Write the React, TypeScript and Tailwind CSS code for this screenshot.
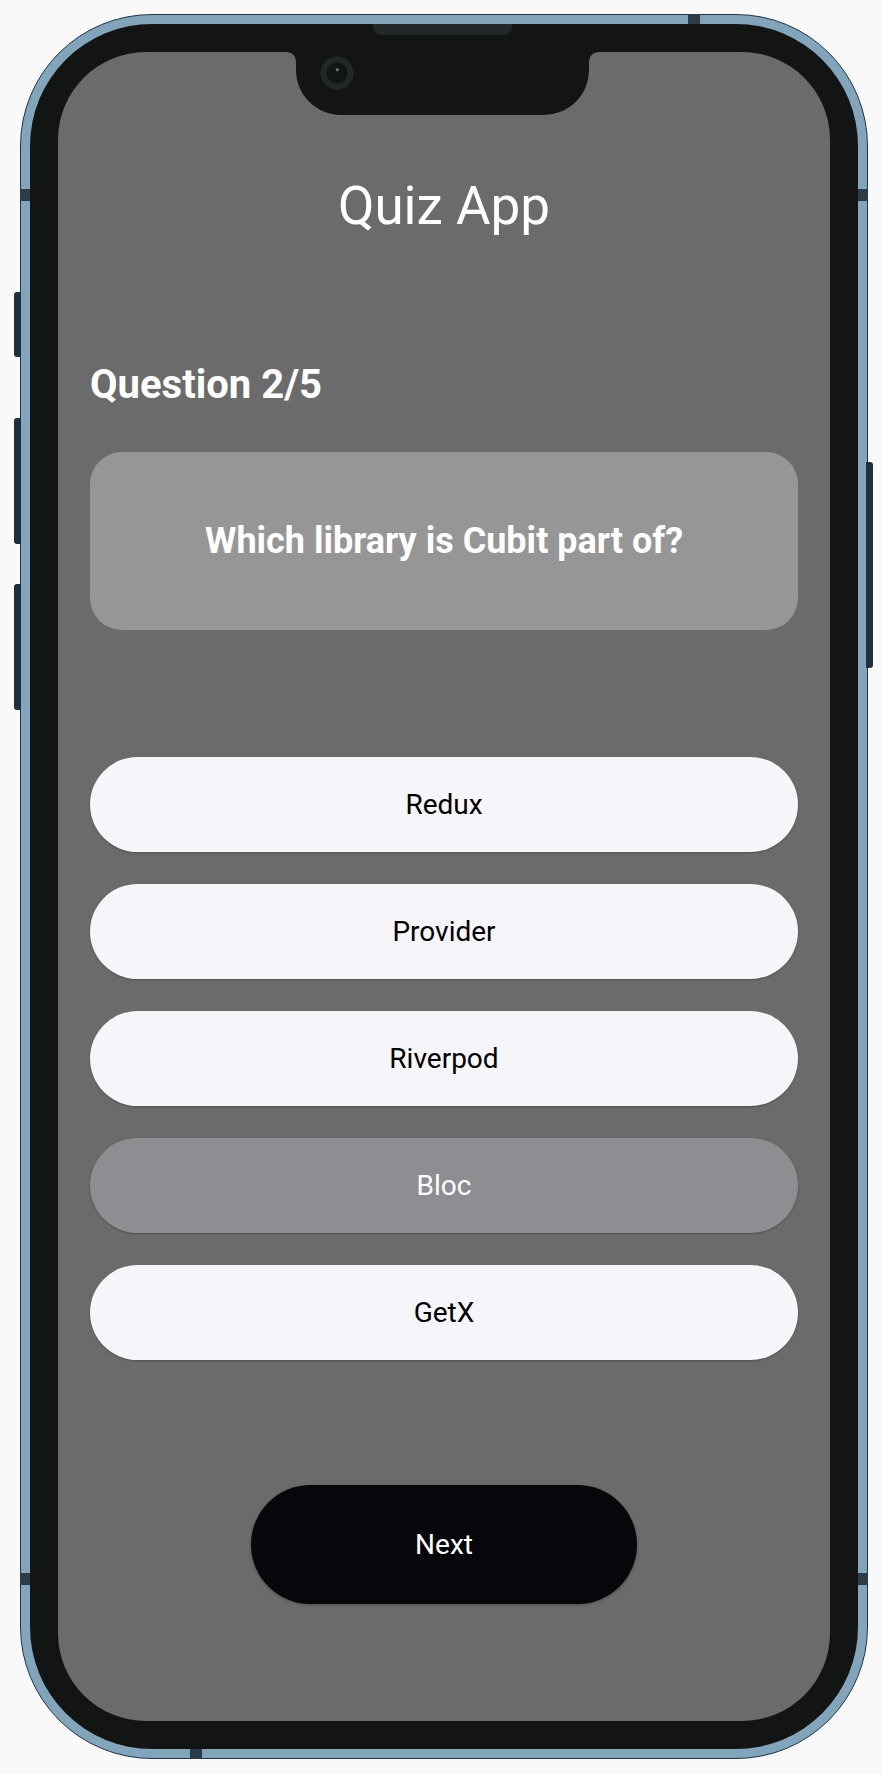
import React from "react";

const options = ["Redux", "Provider", "Riverpod", "Bloc", "GetX"];
const selected = "Bloc";

export default function App() {
  return (
    <div className="min-h-[1774px] w-[882px] bg-[#f9f9f9] pt-[14px] pl-[20px]" style={{ fontFamily: "Roboto, 'Noto Sans', sans-serif" }}>
      <div className="relative h-[1745px] w-[848px] rounded-[132px] border border-[#1f3447] bg-[#83a5bc] p-[9px]">
        {/* side buttons */}
        <div className="absolute left-[-7px] top-[277px] h-[65px] w-[7px] rounded-l-[3px] bg-[#1d3040]" />
        <div className="absolute left-[-7px] top-[403px] h-[126px] w-[7px] rounded-l-[3px] bg-[#1d3040]" />
        <div className="absolute left-[-7px] top-[569px] h-[126px] w-[7px] rounded-l-[3px] bg-[#1d3040]" />
        <div className="absolute right-[-6px] top-[447px] h-[206px] w-[7px] rounded-r-[3px] bg-[#1d3040]" />
        {/* band marks */}
        <div className="absolute left-[667px] top-[-1px] h-[10px] w-[12px] bg-[#2e3c48]" />
        <div className="absolute left-[-1px] top-[174px] h-[12px] w-[10px] bg-[#2e3c48]" />
        <div className="absolute right-[-1px] top-[174px] h-[12px] w-[10px] bg-[#2e3c48]" />
        <div className="absolute left-[-1px] top-[1558px] h-[12px] w-[10px] bg-[#2e3c48]" />
        <div className="absolute right-[-1px] top-[1558px] h-[12px] w-[10px] bg-[#2e3c48]" />
        <div className="absolute bottom-[-1px] left-[169px] h-[10px] w-[12px] bg-[#2e3c48]" />

        <div className="relative h-full w-full rounded-[122px] bg-[#131514] p-[28px]">
          {/* speaker */}
          <div className="absolute left-[343px] top-0 h-[11px] w-[139px] rounded-b-[8px] bg-[#222829]" />

          <div className="relative flex h-full w-full flex-col overflow-hidden rounded-[88px] bg-[#6b6b6b] px-[32px] pt-[128px]">
            {/* notch */}
            <svg className="absolute left-[227px] top-0" width="315" height="63" viewBox="0 0 315 63">
              <path d="M0 0 H315 Q304 0 304 11 V18 A45 45 0 0 1 259 63 H56 A45 45 0 0 1 11 18 V11 Q11 0 0 0 Z" fill="#131514" />
              <circle cx="52" cy="21" r="16.5" fill="#222728" />
              <circle cx="52" cy="21" r="10.5" fill="#131514" />
              <circle cx="52.3" cy="17.7" r="1.6" fill="#5d7384" />
            </svg>

            <h1 className="text-center text-[53px] leading-[53px] font-normal text-white">Quiz App</h1>

            <h2 className="mt-[132px] text-[40px] leading-[40px] font-bold text-white">Question 2/5</h2>

            <div className="mt-[47px] flex h-[178px] items-center justify-center rounded-[32px] bg-[#969696]">
              <p className="text-center text-[36px] leading-[36px] font-bold text-white">Which library is Cubit part of?</p>
            </div>

            <div className="mt-[127px] flex flex-col gap-[32px]">
              {options.map((o) => (
                <div
                  key={o}
                  className={
                    o === selected
                      ? "flex h-[95px] items-center justify-center rounded-full bg-[#8e8d92] text-[28px] text-white shadow-[0_1px_2px_rgba(0,0,0,0.25)]"
                      : "flex h-[95px] items-center justify-center rounded-full bg-[#f5f5fa] text-[28px] text-black shadow-[0_1px_2px_rgba(0,0,0,0.25)]"
                  }
                >
                  {o}
                </div>
              ))}
            </div>

            <div className="mt-[125px] flex justify-center">
              <div className="flex h-[119px] w-[386px] items-center justify-center rounded-full bg-[#06060b] text-[28px] text-white shadow-[0_1px_3px_rgba(0,0,0,0.3)]">
                Next
              </div>
            </div>
          </div>
        </div>
      </div>
    </div>
  );
}
